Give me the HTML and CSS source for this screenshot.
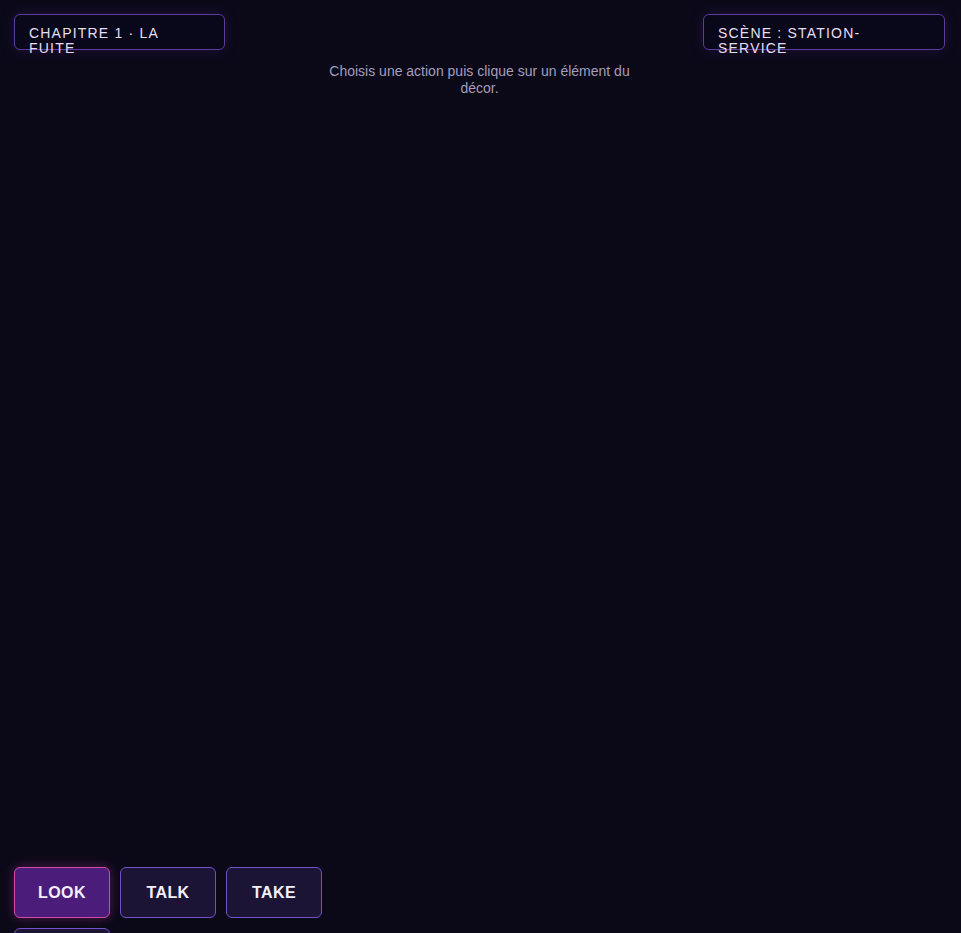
FILE: index.html
```html
<!DOCTYPE html>
<html lang="fr">
<head>
  <meta charset="utf-8">
  <title>Chapitre 1 - La fuite</title>
  <link rel="stylesheet" href="styles.css">
</head>
<body>
  <div class="game">
    <div class="hud">
      <div class="hud-box hud-chapter">Chapitre 1 · La fuite</div>
      <div class="hud-box hud-scene">Scène : Station-service</div>
    </div>
    <p class="hint">Choisis une action puis clique sur un élément du décor.</p>
    <div class="stage"></div>
    <div class="actions">
      <button class="action-btn active">Look</button>
      <button class="action-btn">Talk</button>
      <button class="action-btn">Take</button>
      <button class="action-btn">Use</button>
    </div>
  </div>
</body>
</html>
```
FILE: styles.css
```css
html, body {
  margin: 0;
  height: 100%;
  overflow: hidden;
  background: #0b0918;
  font-family: "Liberation Sans", Arial, sans-serif;
}
.game {
  height: 100vh;
  box-sizing: border-box;
  display: flex;
  flex-direction: column;
  padding: 14px 16px 15px 14px;
}
.hud {
  display: flex;
  justify-content: space-between;
  align-items: flex-start;
}
.hud-box {
  box-sizing: border-box;
  height: 36px;
  padding: 11px 17px 0 14px;
  border: 1px solid #5e3a9a;
  border-radius: 6px;
  background: #09071a;
  box-shadow: 0 0 14px rgba(110, 50, 190, 0.22);
  color: #e6dff4;
  font-size: 14px;
  line-height: 15px;
  letter-spacing: 1.2px;
  text-transform: uppercase;
}
.hud-chapter {
  width: 211px;
}
.hud-scene {
  width: 242px;
}
.hint {
  width: 320px;
  margin: 13px auto 0 auto;
  color: #a49dbb;
  font-size: 14px;
  line-height: 17px;
  text-align: center;
}
.stage {
  flex: 1;
}
.actions {
  width: 320px;
  height: 51px;
  display: flex;
  flex-wrap: wrap;
  gap: 10px;
}
.action-btn {
  width: 96px;
  height: 51px;
  border: 1px solid #7650cc;
  border-radius: 6px;
  background: #1b1435;
  color: #f4f0fb;
  font-family: "Liberation Sans", Arial, sans-serif;
  font-size: 16px;
  font-weight: bold;
  letter-spacing: 0.4px;
  text-transform: uppercase;
  cursor: pointer;
}
.action-btn.active {
  background: #4b1c79;
  border-color: #d24aa8;
  box-shadow: 0 0 12px rgba(210, 60, 170, 0.35);
}
```
